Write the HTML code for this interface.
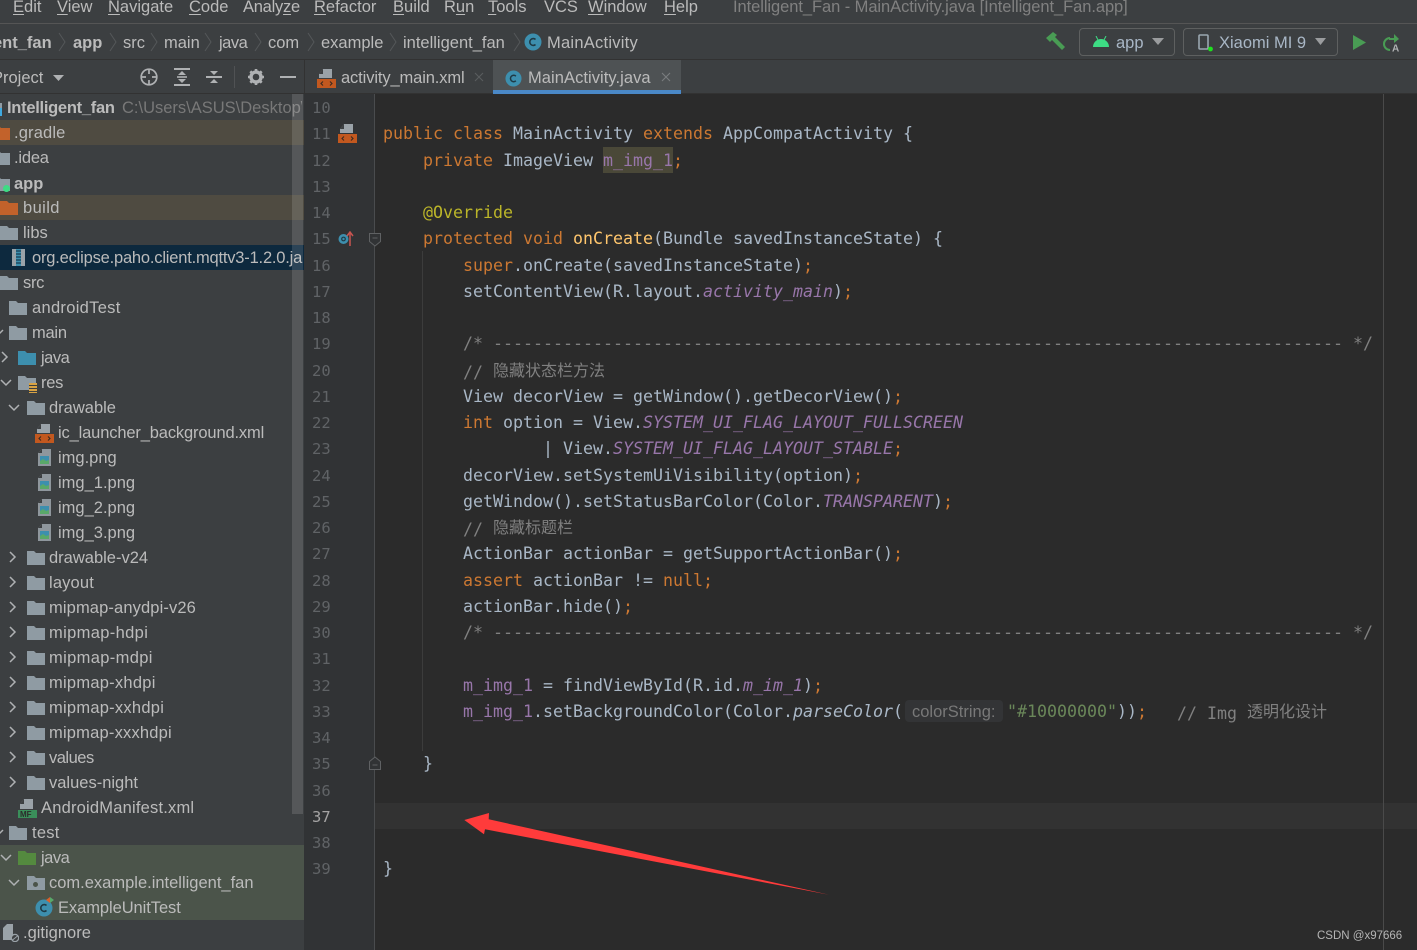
<!DOCTYPE html>
<html><head><meta charset="utf-8"><style>
html,body{margin:0;padding:0;background:#3c3f41}
#p{position:relative;width:1417px;height:950px;overflow:hidden;background:#3c3f41;font-family:"Liberation Sans","Noto Sans CJK SC",sans-serif;font-size:16.5px;color:#bbb}
#p div,#p span.a,#p svg.a{position:absolute}
.t{position:absolute;line-height:24px;height:24px;white-space:nowrap;margin-top:1px}
.r{left:0;width:304px}
.g{color:#787878}
.b{font-weight:bold}
u{text-decoration:underline;text-underline-offset:2px}
.c{position:absolute;white-space:pre;font-family:"DejaVu Sans Mono","Liberation Mono",monospace;font-size:16.62px;line-height:26px;height:26px;color:#a9b7c6;margin-top:1px}
.n{position:absolute;left:312px;width:20px;font-family:"DejaVu Sans Mono",monospace;font-size:15.5px;line-height:26px;color:#606366;margin-top:1px}
.k{color:#cc7832}.f{color:#9876aa;font-style:italic}.m{color:#ffc66d}.s{color:#6a8759}.q{color:#808080}.an{color:#bbb529}.fn{color:#9876aa}
.z{font-family:"Noto Sans CJK SC",sans-serif;font-size:16px;color:#808080;position:relative;top:-2px}
</style></head><body><div id="p">
<svg width="0" height="0" style="position:absolute"><defs>
<symbol id="fo" viewBox="0 0 18 15"><path d="M0 1h7l2 2h9v12H0z"/></symbol>
<symbol id="ci" viewBox="0 0 18 18"><circle cx="9" cy="9" r="8.5" fill="#3d8fae"/><path d="M11.5 6.5A3.4 3.4 0 1 0 11.5 11.5" fill="none" stroke="#1f3a45" stroke-width="1.6"/></symbol>
<symbol id="xm" viewBox="0 0 19 19"><path d="M6 0h9v9H2V5z" fill="#9aa2a8"/><path d="M6 0v5H2z" fill="#3c3f41"/><rect x="0" y="10" width="19" height="9" fill="#c2581f"/><path d="M6 12.5l-2 2 2 2M13 12.5l2 2-2 2" fill="none" stroke="#3c2a20" stroke-width="1.1"/></symbol>
<symbol id="pn" viewBox="0 0 13 17"><path d="M4 0h9v17H0V4z" fill="#8f979d"/><path d="M4 0v4H0z" fill="#3c3f41"/><rect x="2" y="7" width="9" height="8" fill="#3d8fae"/><path d="M2 15v-3l3-2 3 2 3-1v4z" fill="#59a869"/></symbol>
<symbol id="ch" viewBox="0 0 10 12"><path d="M2 1l5 5-5 5" fill="none" stroke="#afb1b3" stroke-width="1.5"/></symbol>
<symbol id="dn" viewBox="0 0 12 10"><path d="M1 2l5 5 5-5" fill="none" stroke="#afb1b3" stroke-width="1.5"/></symbol>
<symbol id="bc" viewBox="0 0 8 20"><path d="M1 1l6 9-6 9" fill="none" stroke="#55585a" stroke-width="1"/></symbol>
</defs></svg>

<!-- menu -->
<div style="left:0;top:23px;width:1417px;height:1px;background:#555"></div>
<span class="t" style="left:13px;top:-6px"><u>E</u>dit</span>
<span class="t" style="left:57px;top:-6px"><u>V</u>iew</span>
<span class="t" style="left:108px;top:-6px"><u>N</u>avigate</span>
<span class="t" style="left:189px;top:-6px"><u>C</u>ode</span>
<span class="t" style="left:243px;top:-6px;letter-spacing:-.25px">Analy<u>z</u>e</span>
<span class="t" style="left:314px;top:-6px"><u>R</u>efactor</span>
<span class="t" style="left:393px;top:-6px"><u>B</u>uild</span>
<span class="t" style="left:444px;top:-6px">R<u>u</u>n</span>
<span class="t" style="left:488px;top:-6px"><u>T</u>ools</span>
<span class="t" style="left:544px;top:-6px">VCS</span>
<span class="t" style="left:588px;top:-6px"><u>W</u>indow</span>
<span class="t" style="left:664px;top:-6px"><u>H</u>elp</span>
<span class="t" style="left:733px;top:-6px;color:#808080;letter-spacing:-.07px">Intelligent_Fan - MainActivity.java [Intelligent_Fan.app]</span>

<!-- breadcrumb -->
<div style="left:0;top:59px;width:1417px;height:1px;background:#323232"></div>
<span class="t b" style="left:-7px;top:30px">ent_fan</span>
<span class="t b" style="left:73px;top:30px">app</span>
<span class="t" style="left:123px;top:30px">src</span>
<span class="t" style="left:164px;top:30px">main</span>
<span class="t" style="left:219px;top:30px;letter-spacing:-.5px">java</span>
<span class="t" style="left:268px;top:30px">com</span>
<span class="t" style="left:321px;top:30px">example</span>
<span class="t" style="left:403px;top:30px">intelligent_fan</span>
<span class="t" style="left:547px;top:30px;letter-spacing:.25px">MainActivity</span>
<svg class="a" style="left:58px;top:32px" width="8" height="20"><use href="#bc"/></svg>
<svg class="a" style="left:109px;top:32px" width="8" height="20"><use href="#bc"/></svg>
<svg class="a" style="left:150px;top:32px" width="8" height="20"><use href="#bc"/></svg>
<svg class="a" style="left:204px;top:32px" width="8" height="20"><use href="#bc"/></svg>
<svg class="a" style="left:254px;top:32px" width="8" height="20"><use href="#bc"/></svg>
<svg class="a" style="left:307px;top:32px" width="8" height="20"><use href="#bc"/></svg>
<svg class="a" style="left:389px;top:32px" width="8" height="20"><use href="#bc"/></svg>
<svg class="a" style="left:513px;top:32px" width="8" height="20"><use href="#bc"/></svg>
<svg class="a" style="left:524px;top:33px" width="18" height="18"><use href="#ci"/></svg>

<!-- toolbar right -->
<svg class="a" style="left:1045px;top:32px" width="21" height="19" viewBox="0 0 21 19"><path d="M1 6l7-6 4 3-2 2 10 10-3 3L7 8 5 10z" fill="#499c54"/></svg>
<div style="left:1079px;top:28px;width:94px;height:26px;border:1px solid #5e6060;border-radius:4px"></div>
<svg class="a" style="left:1093px;top:36px" width="16" height="11" viewBox="0 0 16 11"><path d="M0 11a8 8 0 0 1 16 0z" fill="#3ddc84"/><path d="M3 0l2 4M13 0l-2 4" stroke="#3ddc84"/></svg>
<span class="t" style="left:1116px;top:30px;color:#a9b7c6">app</span>
<svg class="a" style="left:1152px;top:38px" width="12" height="7"><path d="M0 0h12L6 7z" fill="#9a9c9e"/></svg>
<div style="left:1183px;top:28px;width:153px;height:26px;border:1px solid #5e6060;border-radius:4px"></div>
<svg class="a" style="left:1198px;top:34px" width="16" height="18" viewBox="0 0 16 18"><rect x="1" y="1" width="9" height="14" rx="1" fill="none" stroke="#9aa7b0" stroke-width="1.6"/><circle cx="12.5" cy="15" r="2.4" fill="#1fe01f"/></svg>
<span class="t" style="left:1219px;top:30px;color:#a9b7c6">Xiaomi MI 9</span>
<svg class="a" style="left:1315px;top:38px" width="11" height="7"><path d="M0 0h11L5.5 7z" fill="#9a9c9e"/></svg>
<svg class="a" style="left:1353px;top:35px" width="14" height="15"><path d="M0 0l13 7.5L0 15z" fill="#499c54"/></svg>
<svg class="a" style="left:1382px;top:33px" width="19" height="19" viewBox="0 0 19 19"><path d="M8 5a6 6 0 1 0 0 12" fill="none" stroke="#499c54" stroke-width="2"/><path d="M7 5h5V1l5 5-5 4V7H7z" fill="#499c54"/><text x="10" y="18.5" font-family="Liberation Sans" font-size="10" font-weight="bold" fill="#afb1b3">A</text></svg>

<!-- project header -->
<span class="t" style="left:-8px;top:65px">Project</span>
<svg class="a" style="left:53px;top:75px" width="11" height="6"><path d="M0 0h11L5.5 6z" fill="#afb1b3"/></svg>
<svg class="a" style="left:140px;top:68px" width="18" height="18" viewBox="0 0 18 18" fill="none" stroke="#afb1b3" stroke-width="1.7"><circle cx="9" cy="9" r="7.8"/><path d="M9 1v5M9 12v5M1 9h5M12 9h5"/></svg>
<svg class="a" style="left:174px;top:68px" width="16" height="18" viewBox="0 0 16 18" fill="#afb1b3"><rect width="16" height="2"/><rect y="16" width="16" height="2"/><path d="M8 3l4 4H4zM8 15l4-4H4z"/><rect x="3" y="8.2" width="10" height="1.6"/></svg>
<svg class="a" style="left:206px;top:68px" width="16" height="18" viewBox="0 0 16 18" fill="#afb1b3"><path d="M8 7l4-4H4zM8 11l4 4H4z"/><rect y="8" width="16" height="2"/></svg>
<div style="left:234px;top:66px;width:1px;height:22px;background:#505254"></div>
<svg class="a" style="left:248px;top:69px" width="16" height="16" viewBox="0 0 16 16"><circle cx="8" cy="8" r="5" fill="none" stroke="#afb1b3" stroke-width="3.4"/><path d="M8 0v3M8 13v3M0 8h3M13 8h3M2.3 2.3l2 2M11.7 11.7l2 2M2.3 13.7l2-2M11.7 4.3l2-2" stroke="#afb1b3" stroke-width="2.6"/></svg>
<div style="left:280px;top:76px;width:16px;height:2px;background:#afb1b3"></div>
<div style="left:304px;top:60px;width:1px;height:34px;background:#323232"></div>
<div style="left:0;top:93px;width:304px;height:1px;background:#323232"></div>

<!-- tab bar -->
<svg class="a" style="left:317px;top:69px" width="19" height="19"><use href="#xm"/></svg>
<span class="t" style="left:341px;top:65px;letter-spacing:-.12px">activity_main.xml</span>
<svg class="a" style="left:474px;top:72px" width="10" height="10"><path d="M1 1l8 8M9 1l-8 8" stroke="#5a5d5f" stroke-width="1.1"/></svg>
<div style="left:493px;top:60px;width:188px;height:30px;background:#4e5254"></div>
<div style="left:493px;top:90px;width:188px;height:4px;background:#4a88c7"></div>
<svg class="a" style="left:505px;top:70px" width="17" height="17"><use href="#ci"/></svg>
<span class="t" style="left:528px;top:65px;letter-spacing:.06px">MainActivity.java</span>
<svg class="a" style="left:661px;top:72px" width="10" height="10"><path d="M1 1l8 8M9 1l-8 8" stroke="#7a7d7f" stroke-width="1.1"/></svg>

<!-- tree bg rows -->
<div class="r" style="top:120px;height:25px;background:#4f4b41"></div>
<div class="r" style="top:195px;height:25px;background:#4f4b41"></div>
<div class="r" style="top:245px;height:25px;background:#0d293e"></div>
<div class="r" style="top:845px;height:75px;background:#4b544a"></div>

<div style="left:0;top:103px;width:2px;height:5px;background:#8f9ba3"></div>
<div style="left:0;top:108px;width:2px;height:8px;background:#3fa9e0"></div>
<span class="t b" style="left:7px;top:95px;letter-spacing:-.28px">Intelligent_fan</span>
<span class="t" style="left:122px;top:95px;color:#787878;width:180px;overflow:hidden">C:\Users\ASUS\Desktop\Intell</span>
<span class="t" style="left:14px;top:120px;letter-spacing:.15px">.gradle</span>
<span class="t" style="left:14px;top:145px;letter-spacing:-.2px">.idea</span>
<span class="t b" style="left:14px;top:171px">app</span>
<span class="t" style="left:23px;top:195px;letter-spacing:.4px">build</span>
<span class="t" style="left:23px;top:220px">libs</span>
<span class="t" style="left:32px;top:245px;width:271px;overflow:hidden;letter-spacing:-.2px">org.eclipse.paho.client.mqttv3-1.2.0.jar</span>
<span class="t" style="left:23px;top:270px;letter-spacing:-.3px">src</span>
<span class="t" style="left:32px;top:295px;letter-spacing:.3px">androidTest</span>
<span class="t" style="left:32px;top:320px;letter-spacing:-.25px">main</span>
<span class="t" style="left:41px;top:345px;letter-spacing:-.5px">java</span>
<span class="t" style="left:41px;top:370px;letter-spacing:-.3px">res</span>
<span class="t" style="left:49px;top:395px">drawable</span>
<span class="t" style="left:58px;top:420px;letter-spacing:-.15px">ic_launcher_background.xml</span>
<span class="t" style="left:58px;top:445px">img.png</span>
<span class="t" style="left:58px;top:470px">img_1.png</span>
<span class="t" style="left:58px;top:495px">img_2.png</span>
<span class="t" style="left:58px;top:520px">img_3.png</span>
<span class="t" style="left:49px;top:545px">drawable-v24</span>
<span class="t" style="left:49px;top:570px;letter-spacing:.15px">layout</span>
<span class="t" style="left:49px;top:595px;letter-spacing:.12px">mipmap-anydpi-v26</span>
<span class="t" style="left:49px;top:620px;letter-spacing:.35px">mipmap-hdpi</span>
<span class="t" style="left:49px;top:645px;letter-spacing:.35px">mipmap-mdpi</span>
<span class="t" style="left:49px;top:670px;letter-spacing:.25px">mipmap-xhdpi</span>
<span class="t" style="left:49px;top:695px;letter-spacing:.25px">mipmap-xxhdpi</span>
<span class="t" style="left:49px;top:720px;letter-spacing:.2px">mipmap-xxxhdpi</span>
<span class="t" style="left:49px;top:745px;letter-spacing:-.5px">values</span>
<span class="t" style="left:49px;top:770px">values-night</span>
<span class="t" style="left:41px;top:795px;letter-spacing:.2px">AndroidManifest.xml</span>
<span class="t" style="left:32px;top:820px;letter-spacing:.25px">test</span>
<span class="t" style="left:41px;top:845px;letter-spacing:-.5px">java</span>
<span class="t" style="left:49px;top:870px">com.example.intelligent_fan</span>
<span class="t" style="left:58px;top:895px;letter-spacing:-.07px">ExampleUnitTest</span>
<span class="t" style="left:23px;top:920px">.gitignore</span>

<!-- tree icons: folders -->
<svg class="a" style="left:-8px;top:125px" width="18" height="15" fill="#c2622b"><use href="#fo"/></svg>
<svg class="a" style="left:-8px;top:150px" width="18" height="15" fill="#8f9ba3"><use href="#fo"/></svg>
<svg class="a" style="left:-8px;top:176px" width="18" height="15" fill="#8f9ba3"><use href="#fo"/></svg>
<div style="left:3px;top:185px;width:7px;height:7px;border-radius:50%;background:#3ddc84"></div>
<svg class="a" style="left:0;top:200px" width="18" height="15" fill="#c2622b"><use href="#fo"/></svg>
<svg class="a" style="left:0;top:225px" width="18" height="15" fill="#8f9ba3"><use href="#fo"/></svg>
<svg class="a" style="left:0;top:275px" width="18" height="15" fill="#8f9ba3"><use href="#fo"/></svg>
<svg class="a" style="left:9px;top:300px" width="18" height="15" fill="#8f9ba3"><use href="#fo"/></svg>
<svg class="a" style="left:9px;top:325px" width="18" height="15" fill="#8f9ba3"><use href="#fo"/></svg>
<svg class="a" style="left:18px;top:350px" width="18" height="15" fill="#3d8fae"><use href="#fo"/></svg>
<svg class="a" style="left:18px;top:375px" width="18" height="15" fill="#8f9ba3"><use href="#fo"/></svg>
<div style="left:29px;top:383px;width:8px;height:10px;background:repeating-linear-gradient(#d9a343 0 2px,#3c3f41 2px 3px)"></div>
<svg class="a" style="left:27px;top:400px" width="18" height="15" fill="#8f9ba3"><use href="#fo"/></svg>
<svg class="a" style="left:27px;top:550px" width="18" height="15" fill="#8f9ba3"><use href="#fo"/></svg>
<svg class="a" style="left:27px;top:575px" width="18" height="15" fill="#8f9ba3"><use href="#fo"/></svg>
<svg class="a" style="left:27px;top:600px" width="18" height="15" fill="#8f9ba3"><use href="#fo"/></svg>
<svg class="a" style="left:27px;top:625px" width="18" height="15" fill="#8f9ba3"><use href="#fo"/></svg>
<svg class="a" style="left:27px;top:650px" width="18" height="15" fill="#8f9ba3"><use href="#fo"/></svg>
<svg class="a" style="left:27px;top:675px" width="18" height="15" fill="#8f9ba3"><use href="#fo"/></svg>
<svg class="a" style="left:27px;top:700px" width="18" height="15" fill="#8f9ba3"><use href="#fo"/></svg>
<svg class="a" style="left:27px;top:725px" width="18" height="15" fill="#8f9ba3"><use href="#fo"/></svg>
<svg class="a" style="left:27px;top:750px" width="18" height="15" fill="#8f9ba3"><use href="#fo"/></svg>
<svg class="a" style="left:27px;top:775px" width="18" height="15" fill="#8f9ba3"><use href="#fo"/></svg>
<svg class="a" style="left:9px;top:825px" width="18" height="15" fill="#8f9ba3"><use href="#fo"/></svg>
<svg class="a" style="left:18px;top:850px" width="18" height="15" fill="#548a3f"><use href="#fo"/></svg>
<svg class="a" style="left:27px;top:875px" width="18" height="15" fill="#8f9ba3"><use href="#fo"/></svg>
<div style="left:33px;top:882px;width:5px;height:5px;border-radius:50%;background:#4b544a"></div>

<!-- tree icons: chevrons -->
<svg class="a" style="left:-8px;top:328px" width="12" height="10"><use href="#dn"/></svg>
<svg class="a" style="left:-8px;top:828px" width="12" height="10"><use href="#dn"/></svg>
<svg class="a" style="left:0;top:351px" width="10" height="12"><use href="#ch"/></svg>
<svg class="a" style="left:0;top:378px" width="12" height="10"><use href="#dn"/></svg>
<svg class="a" style="left:8px;top:403px" width="12" height="10"><use href="#dn"/></svg>
<svg class="a" style="left:8px;top:551px" width="10" height="12"><use href="#ch"/></svg>
<svg class="a" style="left:8px;top:576px" width="10" height="12"><use href="#ch"/></svg>
<svg class="a" style="left:8px;top:601px" width="10" height="12"><use href="#ch"/></svg>
<svg class="a" style="left:8px;top:626px" width="10" height="12"><use href="#ch"/></svg>
<svg class="a" style="left:8px;top:651px" width="10" height="12"><use href="#ch"/></svg>
<svg class="a" style="left:8px;top:676px" width="10" height="12"><use href="#ch"/></svg>
<svg class="a" style="left:8px;top:701px" width="10" height="12"><use href="#ch"/></svg>
<svg class="a" style="left:8px;top:726px" width="10" height="12"><use href="#ch"/></svg>
<svg class="a" style="left:8px;top:751px" width="10" height="12"><use href="#ch"/></svg>
<svg class="a" style="left:8px;top:776px" width="10" height="12"><use href="#ch"/></svg>
<svg class="a" style="left:0;top:853px" width="12" height="10"><use href="#dn"/></svg>
<svg class="a" style="left:8px;top:878px" width="12" height="10"><use href="#dn"/></svg>

<!-- tree icons: files -->
<svg class="a" style="left:35px;top:424px" width="19" height="19"><use href="#xm"/></svg>
<svg class="a" style="left:38px;top:449px" width="13" height="17"><use href="#pn"/></svg>
<svg class="a" style="left:38px;top:474px" width="13" height="17"><use href="#pn"/></svg>
<svg class="a" style="left:38px;top:499px" width="13" height="17"><use href="#pn"/></svg>
<svg class="a" style="left:38px;top:524px" width="13" height="17"><use href="#pn"/></svg>
<svg class="a" style="left:12px;top:249px" width="13" height="17" viewBox="0 0 13 17"><rect width="13" height="17" fill="#9aa2a8"/><rect x="4" width="5" height="17" fill="#3d8fae"/><path d="M4 2h5M4 5h5M4 8h5M4 11h5M4 14h5" stroke="#0d293e"/></svg>
<svg class="a" style="left:18px;top:799px" width="19" height="19" viewBox="0 0 19 19"><path d="M6 0h9v10H2V5z" fill="#9aa2a8"/><path d="M6 0v5H2z" fill="#3c3f41"/><rect y="11" width="19" height="8" fill="#3a8f5a"/><text x="2" y="18" font-family="Liberation Sans" font-size="8" font-weight="bold" fill="#2b2b2b">MF</text></svg>
<svg class="a" style="left:35px;top:899px" width="18" height="18"><use href="#ci"/></svg>
<svg class="a" style="left:46px;top:897px" width="8" height="7"><path d="M0 3l4-3v6z" fill="#d9622b"/><path d="M4 0l4 3-4 3z" fill="#59a869"/></svg>
<svg class="a" style="left:3px;top:924px" width="16" height="18" viewBox="0 0 16 18"><path d="M4 0h6v12H0V4z" fill="#9aa2a8"/><path d="M0 8h10v8H0z" fill="#9aa2a8"/><circle cx="12" cy="14" r="3.6" fill="#3c3f41" stroke="#9aa2a8" stroke-width="1.2"/><path d="M9.5 16l5-4" stroke="#9aa2a8"/></svg>

<!-- sidebar scrollbar -->
<div style="left:292px;top:94px;width:11px;height:720px;background:rgba(255,255,255,.13)"></div>

<!-- editor -->
<div style="left:304px;top:94px;width:1113px;height:856px;background:#2b2b2b"></div>
<div style="left:304px;top:94px;width:70px;height:856px;background:#313335"></div>
<div style="left:374px;top:94px;width:1px;height:856px;background:#4a4c4e"></div>
<div style="left:304px;top:803px;width:70px;height:26px;background:#313335"></div>
<div style="left:375px;top:803px;width:1042px;height:26px;background:#323232"></div>
<div style="left:1383px;top:94px;width:1px;height:856px;background:#4a4a4a"></div>
<div style="left:304px;top:93px;width:1113px;height:1px;background:#323232"></div>
<div style="left:493px;top:90px;width:188px;height:4px;background:#4a88c7"></div>
<div style="left:422px;top:251px;width:1px;height:500px;background:#3c3c3c"></div>

<!-- line numbers -->
<span class="n" style="top:94px">10</span>
<span class="n" style="top:120px">11</span>
<span class="n" style="top:147px">12</span>
<span class="n" style="top:173px">13</span>
<span class="n" style="top:199px">14</span>
<span class="n" style="top:225px">15</span>
<span class="n" style="top:252px">16</span>
<span class="n" style="top:278px">17</span>
<span class="n" style="top:304px">18</span>
<span class="n" style="top:330px">19</span>
<span class="n" style="top:357px">20</span>
<span class="n" style="top:383px">21</span>
<span class="n" style="top:409px">22</span>
<span class="n" style="top:435px">23</span>
<span class="n" style="top:462px">24</span>
<span class="n" style="top:488px">25</span>
<span class="n" style="top:514px">26</span>
<span class="n" style="top:540px">27</span>
<span class="n" style="top:567px">28</span>
<span class="n" style="top:593px">29</span>
<span class="n" style="top:619px">30</span>
<span class="n" style="top:645px">31</span>
<span class="n" style="top:672px">32</span>
<span class="n" style="top:698px">33</span>
<span class="n" style="top:724px">34</span>
<span class="n" style="top:750px">35</span>
<span class="n" style="top:777px">36</span>
<span class="n" style="top:803px;color:#a4a3a3">37</span>
<span class="n" style="top:829px">38</span>
<span class="n" style="top:855px">39</span>

<!-- gutter icons -->
<svg class="a" style="left:338px;top:124px" width="19" height="19"><use href="#xm"/></svg>
<svg class="a" style="left:338px;top:231px" width="16" height="15" viewBox="0 0 16 15"><circle cx="5.5" cy="8" r="5" fill="#3d8fae"/><circle cx="5.5" cy="8" r="1.8" fill="none" stroke="#1f3a45" stroke-width="1.2"/><path d="M12 15V2M9 5l3-4 3 4" fill="none" stroke="#c75450" stroke-width="1.5"/></svg>
<svg class="a" style="left:369px;top:233px" width="12" height="14" viewBox="0 0 12 14" fill="#313335" stroke="#5f6163"><path d="M.5.5h11v8L6 13 .5 8.500z"/><path d="M3.500 5h5"/></svg>
<svg class="a" style="left:369px;top:756px" width="12" height="14" viewBox="0 0 12 14" fill="#313335" stroke="#5f6163"><path d="M.5 13.500h11v-8L6 1 .5 5.500z"/><path d="M3.500 9h5"/></svg>

<!-- code -->
<span class="c" style="left:383px;top:120px"><span class="k">public class </span>MainActivity <span class="k">extends </span>AppCompatActivity {</span>
<div style="left:603px;top:147px;width:70px;height:26px;background:#4a4838"></div>
<span class="c" style="left:423px;top:147px"><span class="k">private </span>ImageView <span class="fn">m_img_1</span><span class="k">;</span></span>
<span class="c an" style="left:423px;top:199px;color:#bbb529">@Override</span>
<span class="c" style="left:423px;top:225px"><span class="k">protected void </span><span class="m">onCreate</span>(Bundle savedInstanceState) {</span>
<span class="c" style="left:463px;top:252px"><span class="k">super</span>.onCreate(savedInstanceState)<span class="k">;</span></span>
<span class="c" style="left:463px;top:278px">setContentView(R.layout.<span class="f">activity_main</span>)<span class="k">;</span></span>
<span class="c q" style="left:463px;top:330px;color:#808080">/* ------------------------------------------------------------------------------------- */</span>
<span class="c" style="left:463px;top:357px;color:#808080">// <span class="z">隐藏状态栏方法</span></span>
<span class="c" style="left:463px;top:383px">View decorView = getWindow().getDecorView()<span class="k">;</span></span>
<span class="c" style="left:463px;top:409px"><span class="k">int </span>option = View.<span class="f">SYSTEM_UI_FLAG_LAYOUT_FULLSCREEN</span></span>
<span class="c" style="left:543px;top:435px">| View.<span class="f">SYSTEM_UI_FLAG_LAYOUT_STABLE</span><span class="k">;</span></span>
<span class="c" style="left:463px;top:462px">decorView.setSystemUiVisibility(option)<span class="k">;</span></span>
<span class="c" style="left:463px;top:488px">getWindow().setStatusBarColor(Color.<span class="f">TRANSPARENT</span>)<span class="k">;</span></span>
<span class="c" style="left:463px;top:514px;color:#808080">// <span class="z">隐藏标题栏</span></span>
<span class="c" style="left:463px;top:540px">ActionBar actionBar = getSupportActionBar()<span class="k">;</span></span>
<span class="c" style="left:463px;top:567px"><span class="k">assert </span>actionBar != <span class="k">null;</span></span>
<span class="c" style="left:463px;top:593px">actionBar.hide()<span class="k">;</span></span>
<span class="c" style="left:463px;top:619px;color:#808080">/* ------------------------------------------------------------------------------------- */</span>
<span class="c" style="left:463px;top:672px"><span class="fn">m_img_1</span> = findViewById(R.id.<span class="f">m_im_1</span>)<span class="k">;</span></span>
<span class="c" style="left:463px;top:698px"><span class="fn">m_img_1</span>.setBackgroundColor(Color.<span style="font-style:italic">parseColor</span>(</span>
<div style="left:905px;top:700px;width:98px;height:22px;background:#333436;border-radius:4px"></div>
<span class="t" style="left:912px;top:699px;color:#787878">colorString:</span>
<span class="c" style="left:1007px;top:698px"><span class="s">"#10000000"</span>))<span class="k">;</span></span>
<span class="c" style="left:1177px;top:698px;color:#808080">// Img <span class="z">透明化设计</span></span>
<span class="c" style="left:423px;top:750px">}</span>
<span class="c" style="left:383px;top:855px">}</span>

<!-- arrow -->
<svg class="a" style="left:0;top:0" width="1417" height="950"><polygon points="464.300,820 489,813 488.700,819.300 829,894.700 485,829.300 484,834.300" fill="#ff3b3b"/></svg>

<span class="t" style="left:1317px;top:923px;font-size:11.500px;color:#b5b5b5">CSDN @x97666</span>
</div></body></html>
